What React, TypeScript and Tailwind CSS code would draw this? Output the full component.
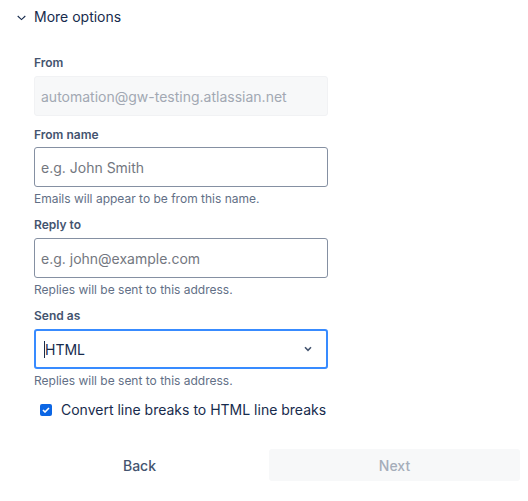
import React from "react";

const font = { fontFamily: "Inter, 'Noto Sans', sans-serif" };

function Label({ children }: { children: React.ReactNode }) {
  return <div className="text-[12px] leading-[16px] font-semibold text-[#44546f]">{children}</div>;
}

function Helper({ children }: { children: React.ReactNode }) {
  return <div className="mt-[4px] text-[12px] leading-[16px] text-[#626f86]">{children}</div>;
}

export default function App() {
  return (
    <div className="w-[528px] h-[501px] bg-white text-[#172b4d]" style={font}>
      <div className="flex items-center h-[34px] pl-[17px] gap-[8px]">
        <svg width="9" height="6" viewBox="0 0 9 6" className="mt-[1px]">
          <path d="M0.7 1 L4.5 4.6 L8.3 1" fill="none" stroke="#172b4d" strokeWidth="1.1" />
        </svg>
        <span className="text-[14px] leading-[20px] text-[#172b4d]">More options</span>
      </div>

      <div className="pl-[34px] w-[328px] pt-[21px]">
        <Label>From</Label>
        <div className="mt-[5px] h-[40px] rounded-[3px] bg-[#f7f8f9] border border-[#f1f2f4] flex items-center px-[6px] text-[14px] text-[#a2a8b3]">
          automation@gw-testing.atlassian.net
        </div>

        <div className="mt-[11px]">
          <Label>From name</Label>
        </div>
        <div className="mt-[4px] h-[40px] rounded-[3px] border border-[#8590a2] flex items-center px-[6px] text-[14px] text-[#737780]">
          e.g. John Smith
        </div>
        <Helper>Emails will appear to be from this name.</Helper>

        <div className="mt-[10px]">
          <Label>Reply to</Label>
        </div>
        <div className="mt-[5px] h-[40px] rounded-[3px] border border-[#8590a2] flex items-center px-[6px] text-[14px] text-[#737780]">
          e.g. john@example.com
        </div>
        <Helper>Replies will be sent to this address.</Helper>

        <div className="mt-[10px]">
          <Label>Send as</Label>
        </div>
        <div className="mt-[5px] h-[40px] rounded-[3px] border-2 border-[#388bff] flex items-center pl-[8px] pr-[14px] text-[14px] text-[#172b4d]">
          <span className="w-[1px] h-[17px] bg-[#172b4d]" />
          <span className="flex-1">HTML</span>
          <svg width="8" height="6" viewBox="0 0 8 6">
            <path d="M1 1.3 L4 4.3 L7 1.3" fill="none" stroke="#44546f" strokeWidth="1.6" />
          </svg>
        </div>
        <Helper>Replies will be sent to this address.</Helper>

        <label className="mt-[11px] flex items-center gap-[9px] pl-[6px]">
          <span className="w-[12px] h-[12px] rounded-[2px] bg-[#0c66e4] flex items-center justify-center">
            <svg width="8" height="6" viewBox="0 0 8 6">
              <path d="M1 3 L3 5 L7 1" fill="none" stroke="white" strokeWidth="1.6" />
            </svg>
          </span>
          <span className="text-[14px] leading-[20px] text-[#172b4d]">Convert line breaks to HTML line breaks</span>
        </label>
      </div>

      <div className="mt-[29px] ml-[14px] w-[506px] flex gap-[4px]">
        <button className="flex-1 h-[32px] rounded-[3px] text-[14px] font-medium text-[#44546f]">Back</button>
        <button className="flex-1 h-[32px] rounded-[3px] bg-[#f7f8f9] text-[14px] font-medium text-[#a5adba]">Next</button>
      </div>
    </div>
  );
}
